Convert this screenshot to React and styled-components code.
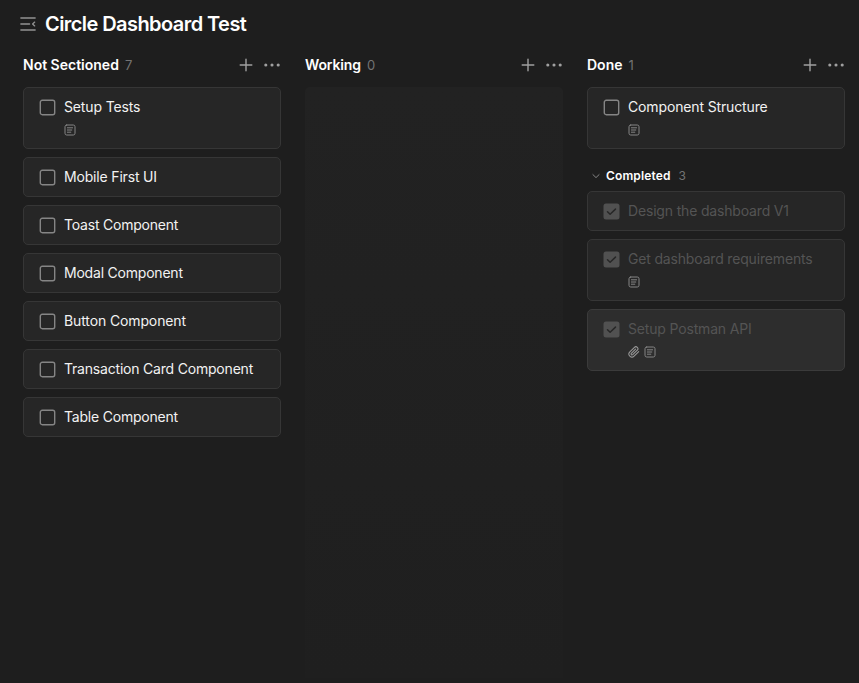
import React from "react";
import styled, { createGlobalStyle, css } from "styled-components";

const GlobalStyle = createGlobalStyle`
  * { box-sizing: border-box; }
  body {
    margin: 0;
    background: #1e1e1e;
    color: #fff;
    font-family: Inter, "Liberation Sans", sans-serif;
    overflow: hidden;
  }
`;

const Page = styled.main`
  display: flex;
  flex-direction: column;
  height: 100vh;
  background: #1e1e1e;
`;

const Header = styled.header`
  display: flex;
  align-items: center;
  gap: 9px;
  height: 48px;
  padding-left: 20px;
`;

const Title = styled.h1`
  margin: 0;
  font-size: 20px;
  line-height: 28px;
  font-weight: 600;
  letter-spacing: -0.57px;
  white-space: nowrap;
`;

const Board = styled.div`
  flex: 1;
  display: grid;
  grid-template-columns: repeat(3, 258px);
  gap: 24px;
  padding: 0 14px 0 23px;
`;

const Column = styled.section`
  display: flex;
  flex-direction: column;
`;

const ColumnHeader = styled.div`
  display: flex;
  align-items: center;
  height: 34px;
  margin-bottom: 5px;
`;

const ColumnName = styled.h2`
  margin: 0;
  font-size: 14px;
  line-height: 20px;
  font-weight: 600;
  letter-spacing: ${(p) => p.$tracking || "0"};
`;

const Count = styled.span`
  margin-left: ${(p) => p.$gap || "6px"};
  font-size: ${(p) => p.$size || "13px"};
  line-height: 20px;
  color: #737373;
`;

const Actions = styled.div`
  display: flex;
  align-items: center;
  gap: 10px;
  margin-left: auto;
`;

const CardList = styled.div`
  display: flex;
  flex-direction: column;
  gap: 8px;
`;

const Card = styled.article`
  display: flex;
  align-items: flex-start;
  gap: 8px;
  height: ${(p) => (p.$tall ? "62px" : "40px")};
  padding: 9px 15px;
  border: 1px solid ${(p) => (p.$active ? "#3b3b3b" : "#363636")};
  border-radius: 5px;
  background: ${(p) => (p.$active ? "#2d2d2d" : "#262626")};
`;

const CheckIconBox = styled.svg`
  display: block;
  flex: none;
  width: 17px;
  height: 17px;
  margin-top: 2px;
  fill: none;
  stroke-linecap: round;
  stroke-linejoin: round;
  ${(p) =>
    p.$checked
      ? css`
          rect { fill: #515151; }
          path { stroke: #272727; stroke-width: 1.5; }
        `
      : css`
          rect { stroke: #858585; stroke-width: 1.4; }
        `}
`;

const CardBody = styled.div`
  display: flex;
  flex-direction: column;
  gap: 7px;
`;

const CardTitle = styled.span`
  font-size: 14px;
  line-height: 20px;
  letter-spacing: ${(p) => p.$tracking || "-0.17px"};
  color: ${(p) => (p.$muted ? "#545454" : "#f2f2f2")};
  white-space: nowrap;
`;

const Meta = styled.div`
  display: flex;
  gap: 4px;
  height: 12px;
`;

const EmptyLane = styled.div`
  flex: 1;
  margin-bottom: 5px;
  border-radius: 5px 5px 0 0;
  background: linear-gradient(#222222, #1f1f1f);
`;

const CompletedHeader = styled.div`
  display: flex;
  align-items: center;
  height: 20px;
  margin: 17px 0 5px;
  padding-left: 5px;
`;

const CompletedLabel = styled.h3`
  margin: 0 0 0 6px;
  font-size: 12px;
  line-height: 20px;
  font-weight: 600;
  letter-spacing: 0.13px;
`;

const Icon = styled.svg`
  display: block;
  flex: none;
  fill: none;
  stroke: ${(p) => p.$color || "#999"};
  stroke-width: ${(p) => p.$weight || 1.5};
  stroke-linecap: round;
  stroke-linejoin: round;
`;

const MenuIcon = () => (
  <Icon width="16" height="16" viewBox="0 0 16 16" $color="#929292">
    <path d="M.9 2h14.2M.9 8h8.6M.9 14h14.2" />
    <path d="m14.7 6.1-2.1 1.9 2.1 1.9" strokeWidth="1.3" />
  </Icon>
);

const PlusIcon = () => (
  <Icon width="14" height="14" viewBox="0 0 14 14" $color="#a0a0a0" $weight={1.4}>
    <path d="M7 1.2v11.6M1.2 7h11.6" />
  </Icon>
);

const MoreIcon = () => (
  <Icon width="18" height="6" viewBox="0 0 18 6" $color="none">
    <g fill="#a0a0a0">
      <circle cx="2.8" cy="3" r="1.55" />
      <circle cx="9" cy="3" r="1.55" />
      <circle cx="15.2" cy="3" r="1.55" />
    </g>
  </Icon>
);

const NoteIcon = () => (
  <Icon width="12" height="12" viewBox="0 0 12 12" $color="#858585" $weight={1}>
    <rect x="1" y="1" width="10" height="10" rx="1.7" />
    <path d="M3.4 3.8h5.2M3.4 6h4.4M3.4 8.2h3.4" />
  </Icon>
);

const ClipIcon = () => (
  <Icon width="12" height="12" viewBox="0 0 24 24" $color="#999" $weight={2.1}>
    <path d="m21.4 11.1-9.2 9.1a6 6 0 0 1-8.5-8.5l9.2-9.1a4 4 0 0 1 5.7 5.7l-9.2 9.1a2 2 0 0 1-2.8-2.8l8.5-8.5" />
  </Icon>
);

const Checkbox = ({ checked }) => (
  <CheckIconBox viewBox="-.5 -.5 17 17" $checked={checked}>
    {checked ? (
      <>
        <rect width="16" height="16" rx="2.5" />
        <path d="m4 8.3 2.6 2.5L12 5.6" />
      </>
    ) : (
      <rect x=".8" y=".8" width="14.4" height="14.4" rx="2" />
    )}
  </CheckIconBox>
);

const ChevronIcon = () => (
  <Icon width="8" height="8" viewBox="0 0 8 8" $color="#858585" $weight={1}>
    <path d="m.9 2.6 3.1 3 3.1-3" />
  </Icon>
);

const metaIcons = { note: NoteIcon, clip: ClipIcon };

const openTasks = [
  { title: "Setup Tests", tracking: "-0.14px", meta: ["note"] },
  { title: "Mobile First UI" },
  { title: "Toast Component", tracking: "-0.21px" },
  { title: "Modal Component", tracking: "-0.21px" },
  { title: "Button Component", tracking: "-0.12px" },
  { title: "Transaction Card Component", tracking: "-0.2px" },
  { title: "Table Component", tracking: "-0.21px" },
];

const doneTasks = [
  { title: "Component Structure", tracking: "-0.14px", meta: ["note"] },
];

const completedTasks = [
  { title: "Design the dashboard V1", checked: true },
  { title: "Get dashboard requirements", checked: true, meta: ["note"] },
  { title: "Setup Postman API", checked: true, active: true, meta: ["clip", "note"] },
];

function Tasks({ items }) {
  return (
    <CardList>
      {items.map(({ title, tracking, meta, checked, active }) => (
        <Card key={title} $tall={Boolean(meta)} $active={active}>
          <Checkbox checked={checked} />
          <CardBody>
            <CardTitle $muted={checked} $tracking={tracking}>{title}</CardTitle>
            {meta && (
              <Meta>
                {meta.map((name) => {
                  const MetaIcon = metaIcons[name];
                  return <MetaIcon key={name} />;
                })}
              </Meta>
            )}
          </CardBody>
        </Card>
      ))}
    </CardList>
  );
}

function SectionHeader({ name, count, tracking }) {
  return (
    <ColumnHeader>
      <ColumnName $tracking={tracking}>{name}</ColumnName>
      <Count>{count}</Count>
      <Actions>
        <PlusIcon />
        <MoreIcon />
      </Actions>
    </ColumnHeader>
  );
}

export default function App() {
  return (
    <Page>
      <GlobalStyle />
      <Header>
        <MenuIcon />
        <Title>Circle Dashboard Test</Title>
      </Header>
      <Board>
        <Column>
          <SectionHeader name="Not Sectioned" count={7} />
          <Tasks items={openTasks} />
        </Column>
        <Column>
          <SectionHeader name="Working" count={0} tracking="-0.13px" />
          <EmptyLane />
        </Column>
        <Column>
          <SectionHeader name="Done" count={1} />
          <Tasks items={doneTasks} />
          <CompletedHeader>
            <ChevronIcon />
            <CompletedLabel>Completed</CompletedLabel>
            <Count $size="12px" $gap="8px">3</Count>
          </CompletedHeader>
          <Tasks items={completedTasks} />
        </Column>
      </Board>
    </Page>
  );
}
